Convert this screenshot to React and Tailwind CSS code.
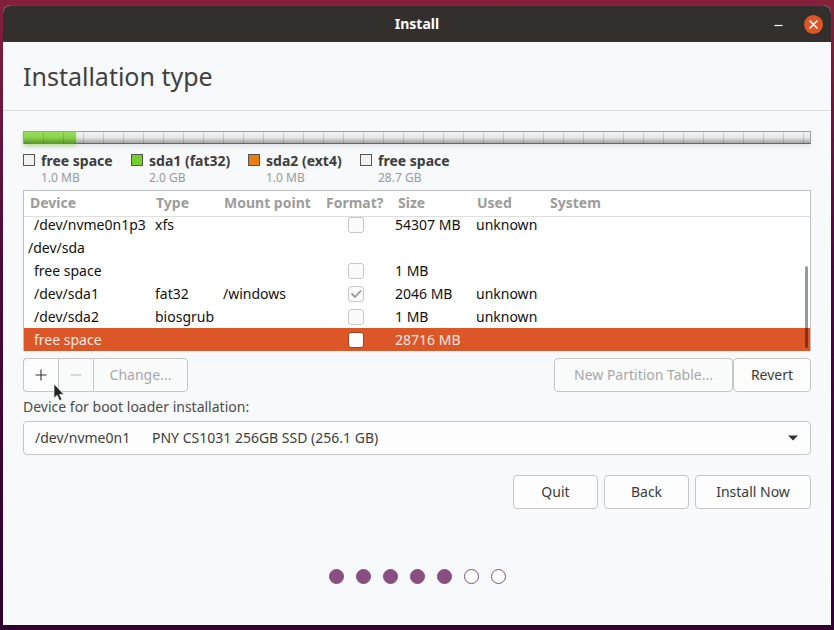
import React, { useState } from 'react';
import clsx from 'clsx';

const legend = [
  { name: 'free space', size: '1.0 MB', color: 'bg-[#f2f2f2]' },
  { name: 'sda1 (fat32)', size: '2.0 GB', color: 'bg-[#73d02b]' },
  { name: 'sda2 (ext4)', size: '1.0 MB', color: 'bg-[#e97d14]' },
  { name: 'free space', size: '28.7 GB', color: 'bg-[#f2f2f2]' },
];

const columns = ['Device', 'Type', 'Mount point', 'Format?', 'Size', 'Used', 'System'];

const partitions = [
  { device: '/dev/nvme0n1p3', type: 'xfs', mount: '', format: false, size: '54307 MB', used: 'unknown' },
  { device: '/dev/sda', disk: true },
  { device: 'free space', type: '', mount: '', format: false, size: '1 MB', used: '' },
  { device: '/dev/sda1', type: 'fat32', mount: '/windows', format: true, size: '2046 MB', used: 'unknown' },
  { device: '/dev/sda2', type: 'biosgrub', mount: '', format: false, size: '1 MB', used: 'unknown' },
  { device: 'free space', type: '', mount: '', format: false, size: '28716 MB', used: '' },
];

const TitleBar = () => (
  <header className="grid h-[37px] grid-cols-[1fr_auto_1fr] items-center rounded-t-lg border-t border-[#4a4744] bg-[#322f2d] px-2 text-white">
    <span />
    <h1 className="text-sm font-bold">Install</h1>
    <div className="flex items-center justify-end gap-5">
      <button aria-label="Minimize" className="flex h-5 w-3 items-center justify-center">
        <svg className="h-3 w-3" viewBox="0 0 12 12">
          <path d="M2.5 7.5h8" stroke="#fff" strokeWidth="1.2" />
        </svg>
      </button>
      <button aria-label="Close" className="flex h-[19px] w-[19px] items-center justify-center rounded-full bg-[#dd5527]">
        <svg className="h-[19px] w-[19px]" viewBox="0 0 19 19" fill="none">
          <path d="M6 6l7 7M13 6l-7 7" stroke="#fff" strokeWidth="1.5" strokeLinecap="round" />
        </svg>
      </button>
    </div>
  </header>
);

const DiskBar = () => (
  <div className="relative flex h-[13px] border border-x-[#a0a0a0] border-t-[#a0a0a0] border-b-[#666] bg-linear-to-b from-[#f4f4f4] via-[#e6e6e6] to-[#a6a6a6] shadow-[0_3px_4px_rgba(0,0,0,0.08)]">
    <div className="w-[52px] bg-linear-to-b from-[#95dc5b] via-[#8ad44c] to-[#609a31] shadow-[0_3px_4px_rgba(115,208,43,0.4)]" />
    <div className="absolute inset-0 bg-[repeating-linear-gradient(90deg,transparent_0px,transparent_19px,rgba(0,0,0,0.14)_19px,rgba(0,0,0,0.14)_20px)]" />
  </div>
);

const Legend = () => (
  <ul className="mt-[7px] grid grid-cols-[108px_117px_112px_auto]">
    {legend.map((item, i) => (
      <li key={i} className="flex gap-1.5 whitespace-nowrap">
        <span className={clsx('mt-[3px] h-3 w-3 border border-[#555]', item.color)} />
        <div>
          <p className="text-sm/[19px] font-bold text-[#3d3d3d]">{item.name}</p>
          <p className="text-xs/4 text-[#9a9a9a]">{item.size}</p>
        </div>
      </li>
    ))}
  </ul>
);

const FormatBox = ({ checked, selected, label }) => (
  <span className="relative mx-auto block h-4 w-4">
    <input
      type="checkbox"
      aria-label={label}
      defaultChecked={checked}
      disabled={!selected}
      className={clsx(
        'block h-4 w-4 appearance-none rounded-[3px] border',
        selected ? 'border-[#a5431f] bg-white' : 'border-[#c9c9c9] bg-[#fafafa]'
      )}
    />
    {checked && (
      <svg className="pointer-events-none absolute inset-0" viewBox="0 0 16 16" fill="none">
        <path d="M3.5 7.5L7 11l6-6.5" stroke="#959b9b" strokeWidth="1.8" />
      </svg>
    )}
  </span>
);

const PartitionTable = () => {
  const [selected, setSelected] = useState(5);

  return (
    <div className="relative border border-b-0 border-[#c0c0c0] bg-white">
      <table className="w-full table-fixed border-collapse text-left text-sm/[18px] whitespace-nowrap">
        <colgroup>
          <col className="w-[126px]" />
          <col className="w-[68px]" />
          <col className="w-[102px]" />
          <col className="w-[72px]" />
          <col className="w-[79px]" />
          <col className="w-[73px]" />
          <col />
        </colgroup>
        <thead>
          <tr className="h-[25px] border-b border-[#dedede] text-[#9c9c9c]">
            {columns.map((name) => (
              <th key={name} className="p-0 pl-1.5 font-bold">{name}</th>
            ))}
          </tr>
        </thead>
        <tbody>
          {partitions.map((row, i) => (
            <tr
              key={i}
              onClick={() => setSelected(i)}
              className={clsx(
                i === 0 ? 'h-5 align-top leading-4' : 'h-[23px]',
                i === selected ? 'bg-[#dc5628] text-[#fbe9e2]' : 'text-[#111]'
              )}
            >
              <td className={clsx('p-0', row.disk ? 'pl-1' : 'pl-2.5')}>{row.device}</td>
              <td className="p-0 pl-[5px]">{row.type}</td>
              <td className="p-0 pl-[5px]">{row.mount}</td>
              <td className="p-0">
                {!row.disk && (
                  <FormatBox checked={row.format} selected={i === selected} label={`Format ${row.device}`} />
                )}
              </td>
              <td className="p-0 pl-[3px]">{row.size}</td>
              <td className="p-0 pl-[5px]">{row.used}</td>
              <td className="p-0" />
            </tr>
          ))}
        </tbody>
      </table>
      {/* Scrollbar thumb */}
      <div className="absolute right-0.5 bottom-[3px] h-[82px] w-[3px] rounded-full bg-black/40" />
    </div>
  );
};

const Button = ({ className, children, ...props }) => (
  <button
    className={clsx(
      'h-[34px] rounded border border-[#c6c6c6] bg-[#fdfdfd] text-sm text-[#3b3b3b] disabled:bg-[#fafbfb] disabled:text-[#a6a8a8]',
      className
    )}
    {...props}
  >
    {children}
  </button>
);

const Toolbar = () => (
  <div className="mt-[7px] flex justify-between">
    <div className="flex">
      <Button aria-label="Add partition" className="relative flex w-[35px] items-center justify-center rounded-r-none border-r-0">
        <svg className="h-3 w-3" viewBox="0 0 12 12">
          <path d="M6 .5v11M.5 6h11" stroke="#333" strokeWidth="1.1" />
        </svg>
        {/* Mouse pointer */}
        <svg className="absolute top-6 left-[29px] z-10 h-[19px] w-3" viewBox="0 0 12 19">
          <path d="M1 1v14.2l3.2-2.9 2.3 5.3 2.4-1-2.3-5.2h4.3z" fill="#222" stroke="#e8e8e8" strokeWidth=".8" />
        </svg>
      </Button>
      <Button aria-label="Remove partition" disabled className="flex w-[35px] items-center justify-center rounded-none border-r-0">
        <svg className="h-3 w-3" viewBox="0 0 12 12">
          <path d="M.5 6h11" stroke="#b4b6b6" strokeWidth="1" />
        </svg>
      </Button>
      <Button disabled className="w-[95px] rounded-l-none">Change...</Button>
    </div>
    <div className="flex">
      <Button disabled className="w-[179px]">New Partition Table...</Button>
      <Button className="w-[78px]">Revert</Button>
    </div>
  </div>
);

const BootLoader = () => (
  <div>
    <label htmlFor="bootloader" className="mt-1 block text-sm/[22px] text-[#4c4c4c]">
      Device for boot loader installation:
    </label>
    <div className="relative mt-[3px]">
      <select
        id="bootloader"
        className="h-[34px] w-full appearance-none rounded border border-[#c6c6c6] bg-[#fdfdfd] px-[11px] text-sm text-[#3d3d3d]"
      >
        <option>{'/dev/nvme0n1\u00a0\u00a0\u00a0\u00a0\u00a0\u00a0PNY CS1031 256GB SSD (256.1 GB)'}</option>
      </select>
      <svg className="pointer-events-none absolute top-3.5 right-3 h-1.5 w-3" viewBox="0 0 12 6">
        <path d="M1 .5h10L6 5.5z" fill="#333" />
      </svg>
    </div>
  </div>
);

const Progress = ({ step, total }) => (
  <div className="mt-[60px] flex justify-center gap-3">
    {Array.from({ length: total }, (_, i) => (
      <span
        key={i}
        className={clsx('h-[15px] w-[15px] rounded-full border border-[#835078]', i < step ? 'bg-[#8b4e83]' : 'bg-white')}
      />
    ))}
  </div>
);

export default function App() {
  return (
    <div className="flex min-h-screen flex-col bg-linear-to-b from-[#85203a] via-[#4a0d3a] via-40% to-[#2f0230] px-[3px] py-[5px] font-['Noto_Sans',sans-serif]">
      <div className="flex flex-1 flex-col rounded-t-lg bg-[#f8f9fb]">
        <TitleBar />
        <div className="border-b border-[#dadada] px-5 pt-4 pb-4">
          <h2 className="text-[25px]/9 text-[#414141]">Installation type</h2>
        </div>
        <main className="px-5 pt-5 pb-10">
          <DiskBar />
          <Legend />
          <div className="mt-1">
            <PartitionTable />
          </div>
          <Toolbar />
          <BootLoader />
          <div className="mt-5 flex justify-end gap-1.5">
            <Button className="w-[85px]">Quit</Button>
            <Button className="w-[85px]">Back</Button>
            <Button className="w-[116px]">Install Now</Button>
          </div>
          <Progress step={5} total={7} />
        </main>
      </div>
    </div>
  );
}
